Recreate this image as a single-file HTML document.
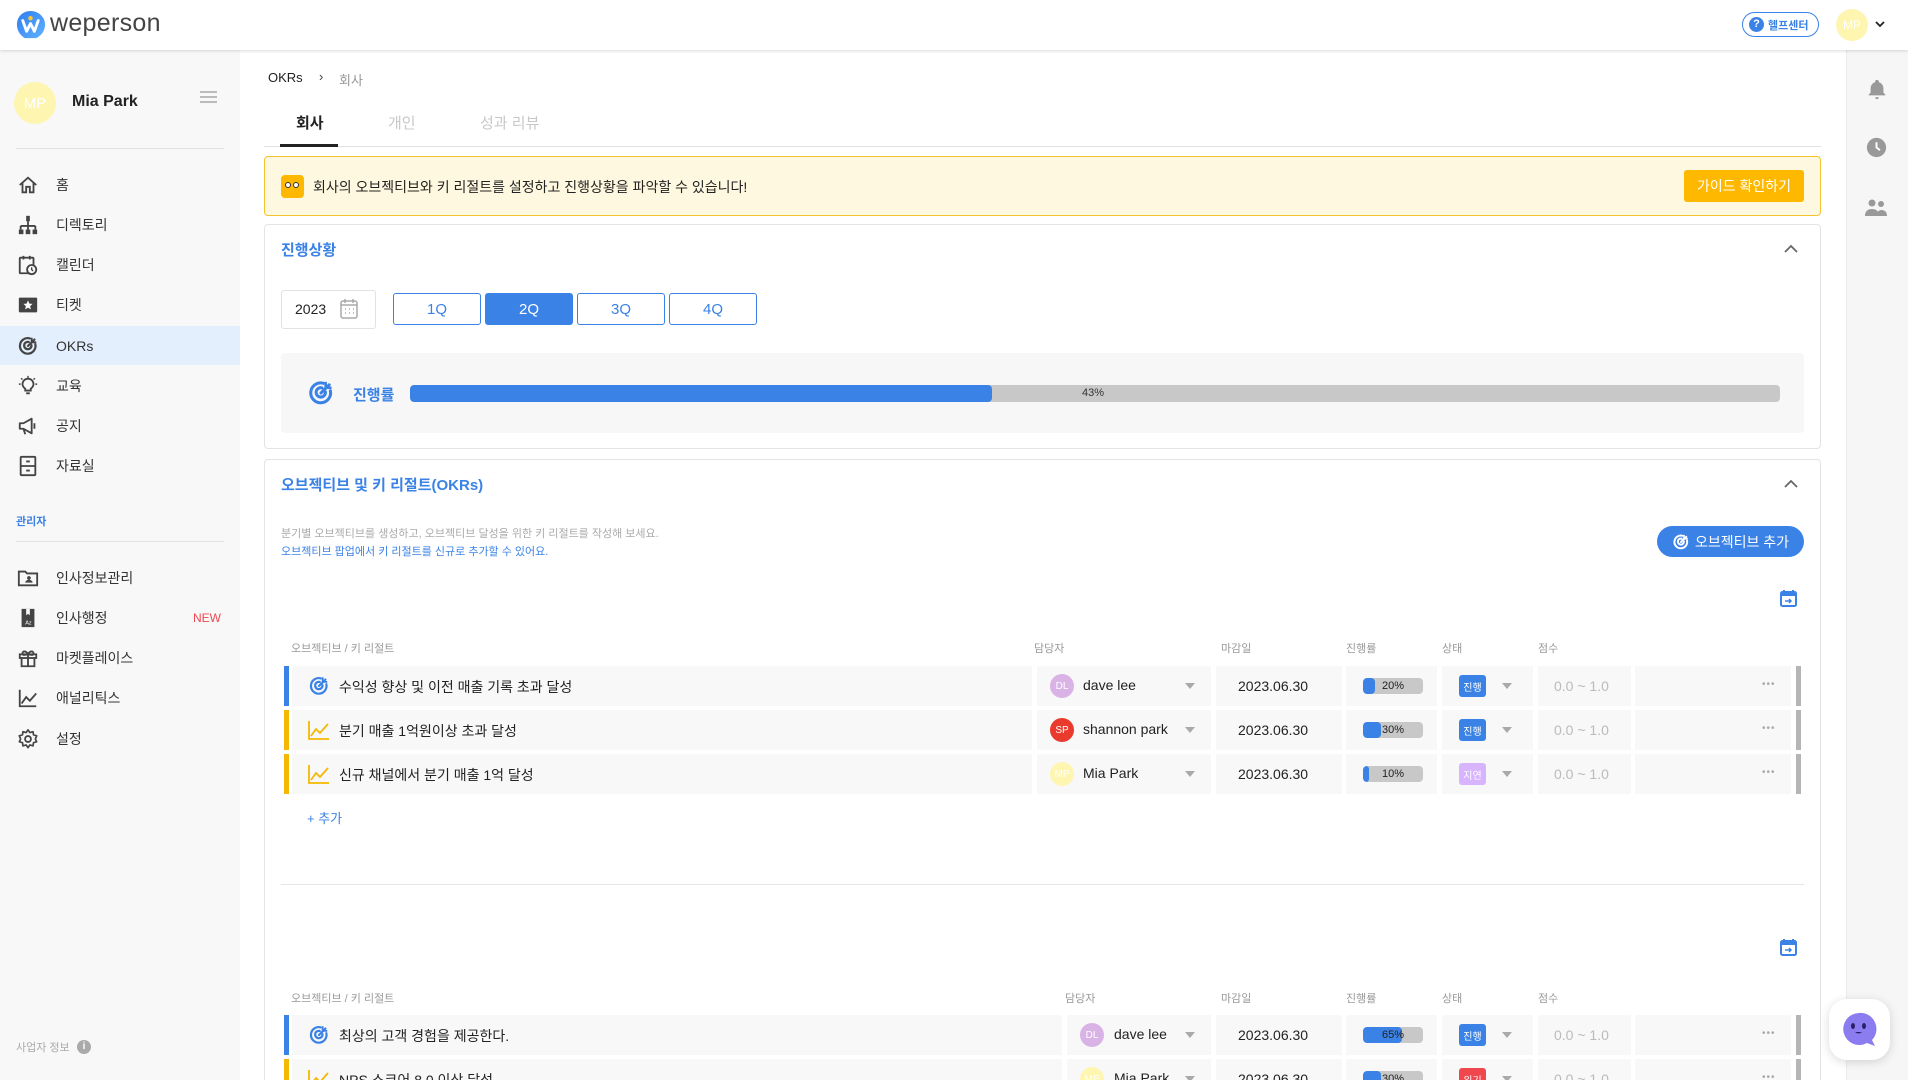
<!DOCTYPE html>
<html><head><meta charset="utf-8">
<style>
*{box-sizing:border-box;margin:0;padding:0}
html,body{width:1908px;height:1080px;overflow:hidden}
body{background:#fff;font-family:"Liberation Sans","Noto Sans CJK KR",sans-serif;color:#222}
#w{position:relative;width:1908px;height:1080px;overflow:hidden}
.a{position:absolute}
.hdr{left:0;top:0;width:1908px;height:50px;background:#fff;box-shadow:0 1px 3px rgba(0,0,0,.15);z-index:5}
.side{left:0;top:50px;width:240px;height:1030px;background:#f8f8f8}
.rail{left:1846px;top:50px;width:62px;height:1030px;background:#f6f6f6;border-left:1px solid #ececec}
.mi{left:0;width:240px;height:40px;display:flex;align-items:center;font-size:14px;color:#333}
.mi svg{position:absolute;left:17px;width:22px;height:22px}
.mi span{position:absolute;left:56px}
.card{background:#fff;border:1px solid #e4e4e4;border-radius:4px}
.qb{top:293px;width:88px;height:32px;border:1px solid #3b82e6;border-radius:3px;color:#3b82e6;font-size:15px;display:flex;align-items:center;justify-content:center;background:#fff}
.th{font-size:11px;color:#999}
.row{left:284px;width:1517px;height:40px}
.c{position:absolute;top:0;height:40px;background:#f8f8f8}
.bar{position:absolute;left:0;top:0;width:5px;height:40px}
.tt{position:absolute;left:55px;top:11px;font-size:14px;color:#222}
.av{position:absolute;top:8px;width:24px;height:24px;border-radius:50%;color:#fff;font-size:10px;display:flex;align-items:center;justify-content:center}
.nm{position:absolute;top:11px;font-size:14px}
.dd{position:absolute;top:17px;width:0;height:0;border-left:5px solid transparent;border-right:5px solid transparent;border-top:6px solid #aaa}
.dt{position:absolute;top:12px;font-size:14px}
.pg{position:absolute;top:12px;width:60px;height:16px;background:#c8c8c8;border-radius:4px;overflow:hidden;font-size:11px;text-align:center;line-height:16px;color:#222}
.pg i{position:absolute;left:0;top:0;height:16px;background:#3b82e6;border-radius:4px}
.pg b{position:relative;font-weight:normal}
.st{position:absolute;top:9px;width:27px;height:22px;border-radius:3px;color:#fff;font-size:10px;display:flex;align-items:center;justify-content:center}
.sc{position:absolute;top:12px;font-size:14px;color:#bbb}
.dots{position:absolute;top:13px;font-size:10px;color:#aaa;letter-spacing:1px}
.rb{position:absolute;left:1512px;top:0;width:5px;height:40px;background:#b5b5b5}
</style></head><body><div id="w">

<!-- header -->
<div class="a hdr">
  <svg class="a" style="left:15px;top:10px" width="31" height="31" viewBox="0 0 32 32"><defs><linearGradient id="lg" x1="0" y1="0" x2="1" y2="1"><stop offset="0" stop-color="#2f7cf0"/><stop offset="1" stop-color="#5fb3ff"/></linearGradient></defs><path d="M16 1C8 1 2 7 2 15c0 6 3 11 8 14h12c6-3 9-8 9-14C31 7 24 1 16 1z" fill="url(#lg)"/><path d="M8 11l4 11 4-8 4 8 4-11" stroke="#fff" stroke-width="3" fill="none" stroke-linejoin="round" stroke-linecap="round"/><circle cx="16" cy="8.5" r="2.3" fill="#ffc82c"/></svg>
  <div class="a" style="left:50px;top:9px;font-size:25px;color:#444;letter-spacing:.3px">weperson</div>
  <div class="a" style="left:1742px;top:12px;width:77px;height:25px;border:1.5px solid #3b82e6;border-radius:13px;display:flex;align-items:center;padding-left:6px;font-size:11px;color:#3b82e6;font-weight:bold"><span style="display:inline-block;width:15px;height:15px;border-radius:50%;background:#3b82e6;color:#fff;font-size:11px;text-align:center;line-height:15px;margin-right:4px">?</span>헬프센터</div>
  <div class="a" style="left:1836px;top:9px;width:32px;height:32px;border-radius:50%;background:#fdf5b0;color:#fff;font-size:12px;display:flex;align-items:center;justify-content:center">MP</div>
  <svg class="a" style="left:1875px;top:20px" width="10" height="8" viewBox="0 0 10 8"><path d="M1 2l4 4 4-4" stroke="#222" stroke-width="1.8" fill="none"/></svg>
</div>

<!-- sidebar -->
<div class="a side"></div>
<div class="a" style="left:14px;top:82px;width:42px;height:42px;border-radius:50%;background:#fdf5b0;color:#fff;font-size:15px;display:flex;align-items:center;justify-content:center">MP</div>
<div class="a" style="left:72px;top:93px;font-size:16px;font-weight:bold">Mia Park</div>
<div class="a" style="left:200px;top:91px;width:17px;height:2px;background:#bbb;box-shadow:0 5px 0 #bbb,0 10px 0 #bbb"></div>
<div class="a" style="left:16px;top:148px;width:208px;height:1px;background:#e2e2e2"></div>

<div class="a mi" style="top:165px"><svg viewBox="0 0 24 24"><path d="M3 12l9-8 9 8M6 10v10h4v-6h4v6h4V10" stroke="#444" stroke-width="2" fill="none"/></svg><span>홈</span></div>
<div class="a mi" style="top:205px"><svg viewBox="0 0 24 24"><rect x="10" y="2" width="4" height="6" fill="#444"/><path d="M12 8v5M4 13h16M4 13v4M12 13v4M20 13v4" stroke="#444" stroke-width="2" fill="none"/><rect x="2" y="17" width="5" height="5" fill="#444"/><rect x="9.5" y="17" width="5" height="5" fill="#444"/><rect x="17" y="17" width="5" height="5" fill="#444"/></svg><span>디렉토리</span></div>
<div class="a mi" style="top:245px"><svg viewBox="0 0 24 24"><rect x="3" y="4" width="15" height="17" rx="1" stroke="#444" stroke-width="2" fill="none"/><path d="M7 2v4M14 2v4" stroke="#444" stroke-width="2"/><circle cx="16" cy="17" r="5" fill="#f8f8f8" stroke="#444" stroke-width="2"/><path d="M16 14.5V17l1.5 1.5" stroke="#444" stroke-width="1.5" fill="none"/></svg><span>캘린더</span></div>
<div class="a mi" style="top:285px"><svg viewBox="0 0 24 24"><rect x="2" y="4" width="20" height="16" rx="1" fill="#444"/><path d="M12 7l1.5 3.5 3.5.3-2.7 2.4.9 3.6L12 15l-3.2 1.8.9-3.6L7 10.8l3.5-.3z" fill="#fff"/></svg><span>티켓</span></div>
<div class="a" style="left:0;top:326px;width:240px;height:39px;background:#e3effd"></div>
<div class="a mi" style="top:326px"><svg viewBox="0 0 24 24"><path d="M20 10A8.5 8.5 0 1 1 14 3.7M15.8 11.2A4 4 0 1 1 12.8 7.6M12 12l7-7" stroke="#444" stroke-width="2.4" fill="none" stroke-linecap="round"/><path d="M16 3v5h5" stroke="#444" stroke-width="2" fill="none"/></svg><span>OKRs</span></div>
<div class="a mi" style="top:366px"><svg viewBox="0 0 24 24"><path d="M9 17h6v-2c2-1.5 3-3 3-5a6 6 0 0 0-12 0c0 2 1 3.5 3 5z M10 20h4" stroke="#444" stroke-width="2" fill="none"/><path d="M12 1v2M2 10h2M20 10h2M4.5 3.5l1.4 1.4M19.5 3.5l-1.4 1.4" stroke="#444" stroke-width="1.6"/></svg><span>교육</span></div>
<div class="a mi" style="top:406px"><svg viewBox="0 0 24 24"><path d="M3 9h4l9-5v16l-9-5H3z M7 15l2 6" stroke="#444" stroke-width="2" fill="none" stroke-linejoin="round"/><path d="M19 9v6" stroke="#444" stroke-width="2"/></svg><span>공지</span></div>
<div class="a mi" style="top:446px"><svg viewBox="0 0 24 24"><rect x="4" y="2" width="16" height="20" rx="1" stroke="#444" stroke-width="2" fill="none"/><path d="M4 12h16M10 7h4M10 17h4" stroke="#444" stroke-width="2"/></svg><span>자료실</span></div>

<div class="a" style="left:16px;top:513px;font-size:11px;color:#3b82e6;font-weight:bold">관리자</div>
<div class="a" style="left:16px;top:541px;width:208px;height:1px;background:#e2e2e2"></div>
<div class="a mi" style="top:558px"><svg viewBox="0 0 24 24"><path d="M2 5h7l2 2h11v13H2z" stroke="#444" stroke-width="2" fill="none"/><circle cx="13" cy="12" r="2" fill="#444"/><path d="M9 17c0-2 2-3 4-3s4 1 4 3z" fill="#444"/></svg><span>인사정보관리</span></div>
<div class="a mi" style="top:598px"><svg viewBox="0 0 24 24"><path d="M5 2h14v20H5z" fill="#444"/><path d="M10 2v7l2-1.5 2 1.5V2" fill="#f8f8f8"/><text x="9" y="19" font-size="6" fill="#fff" font-family="Liberation Sans">Az</text></svg><span>인사행정</span><span style="left:193px;color:#f0474f;font-size:12px">NEW</span></div>
<div class="a mi" style="top:638px"><svg viewBox="0 0 24 24"><rect x="3" y="8" width="18" height="4" stroke="#444" stroke-width="2" fill="none"/><path d="M5 12v9h14v-9M12 8v13M12 8c-2-4-6-4-6-1s4 1 6 1c2 0 6 2 6-1s-4-3-6 1" stroke="#444" stroke-width="2" fill="none"/></svg><span>마켓플레이스</span></div>
<div class="a mi" style="top:678px"><svg viewBox="0 0 24 24"><path d="M3 3v18h18M5 18l5-7 4 4 7-8" stroke="#444" stroke-width="2" fill="none"/></svg><span>애널리틱스</span></div>
<div class="a mi" style="top:719px"><svg viewBox="0 0 24 24"><circle cx="12" cy="12" r="3.2" stroke="#444" stroke-width="2" fill="none"/><path d="M12 2l2 3 3.5-1 .5 3.5 3.5 1-1.5 3.5 1.5 3-3.5 1-.5 3.5-3.5-1-2 3-2-3-3.5 1-.5-3.5-3.5-1 1.5-3-1.5-3.5 3.5-1L6.5 4 10 5z" stroke="#444" stroke-width="1.8" fill="none" stroke-linejoin="round"/></svg><span>설정</span></div>

<div class="a" style="left:16px;top:1039px;font-size:11px;color:#aaa">사업자 정보</div>
<div class="a" style="left:77px;top:1040px;width:14px;height:14px;border-radius:50%;background:#aaa;color:#fff;font-size:10px;text-align:center;line-height:14px;font-weight:bold">i</div>

<!-- right rail -->
<div class="a rail"></div>
<svg class="a" style="left:1866px;top:78px" width="22" height="22" viewBox="0 0 24 24"><path d="M12 2a2 2 0 0 1 2 2v.5A7 7 0 0 1 19 11v5l2 2v1H3v-1l2-2v-5a7 7 0 0 1 5-6.5V4a2 2 0 0 1 2-2zM10 21h4a2 2 0 0 1-4 0" fill="#999"/></svg>
<svg class="a" style="left:1866px;top:137px" width="21" height="21" viewBox="0 0 24 24"><circle cx="12" cy="12" r="11" fill="#999"/><path d="M12 6v6l4 3" stroke="#fff" stroke-width="2.2" fill="none"/></svg>
<svg class="a" style="left:1864px;top:198px" width="24" height="20" viewBox="0 0 24 20"><circle cx="8" cy="5" r="3.5" fill="#999"/><circle cx="17" cy="6" r="3" fill="#999"/><path d="M1 18c0-5 3-7 7-7s7 2 7 7zM13 18c0-3 0-5 4-6 4 0 6 2 6 6z" fill="#999"/></svg>

<!-- breadcrumb & tabs -->
<div class="a" style="left:268px;top:70px;font-size:13px;color:#222">OKRs</div>
<div class="a" style="left:319px;top:69px;font-size:13px;color:#444">›</div>
<div class="a" style="left:339px;top:70px;font-size:13px;color:#999">회사</div>
<div class="a" style="left:264px;top:146px;width:1557px;height:1px;background:#e2e2e2"></div>
<div class="a" style="left:296px;top:112px;font-size:15px;font-weight:bold;color:#222">회사</div>
<div class="a" style="left:280px;top:144px;width:58px;height:3px;background:#222"></div>
<div class="a" style="left:388px;top:112px;font-size:15px;color:#c8c8c8">개인</div>
<div class="a" style="left:480px;top:112px;font-size:15px;color:#c8c8c8">성과 리뷰</div>

<!-- notice -->
<div class="a" style="left:264px;top:156px;width:1557px;height:60px;background:#fff8e0;border:1px solid #f4c430;border-radius:4px"></div>
<div class="a" style="left:281px;top:175px;width:23px;height:23px;border-radius:4px;background:#ffb800"><div class="a" style="left:4px;top:7px;width:6px;height:6px;border-radius:50%;background:#fff;border:1.5px solid #333"></div><div class="a" style="left:12px;top:7px;width:6px;height:6px;border-radius:50%;background:#fff;border:1.5px solid #333"></div></div>
<div class="a" style="left:313px;top:177px;font-size:14px;color:#222">회사의 오브젝티브와 키 리절트를 설정하고 진행상황을 파악할 수 있습니다!</div>
<div class="a" style="left:1684px;top:170px;width:120px;height:32px;background:#ffb800;border-radius:3px;color:#fff;font-size:14px;display:flex;align-items:center;justify-content:center">가이드 확인하기</div>

<!-- progress card -->
<div class="a card" style="left:264px;top:224px;width:1557px;height:225px"></div>
<div class="a" style="left:281px;top:239px;font-size:15px;color:#3b82e6;font-weight:bold">진행상황</div>
<svg class="a" style="left:1784px;top:244px" width="14" height="9" viewBox="0 0 14 9"><path d="M1 8l6-6 6 6" stroke="#666" stroke-width="1.8" fill="none"/></svg>
<div class="a" style="left:281px;top:290px;width:95px;height:39px;border:1px solid #e2e2e2;border-radius:3px;background:#fff"></div>
<div class="a" style="left:295px;top:301px;font-size:14px">2023</div>
<svg class="a" style="left:340px;top:298px" width="18" height="21" viewBox="0 0 18 21"><rect x="1" y="3" width="16" height="17" rx="2" stroke="#aaa" stroke-width="1.5" fill="none"/><path d="M1 7h16M5 1v4M13 1v4" stroke="#aaa" stroke-width="1.5"/><path d="M5 11h1M9 11h1M13 11h1M5 15h1M9 15h1M13 15h1" stroke="#aaa" stroke-width="1.5"/></svg>
<div class="a qb" style="left:393px">1Q</div>
<div class="a qb" style="left:485px;background:#3b82e6;color:#fff">2Q</div>
<div class="a qb" style="left:577px">3Q</div>
<div class="a qb" style="left:669px">4Q</div>
<div class="a" style="left:281px;top:353px;width:1523px;height:80px;background:#f7f7f7;border-radius:4px"></div>
<svg class="a" style="left:307px;top:379px" width="28" height="28" viewBox="0 0 24 24"><path d="M20 10A8.5 8.5 0 1 1 14 3.7M15.8 11.2A4 4 0 1 1 12.8 7.6M12 12l7-7" stroke="#3b82e6" stroke-width="2.6" fill="none" stroke-linecap="round"/><path d="M16 2.5v5h5" stroke="#3b82e6" stroke-width="2.2" fill="none"/></svg>
<div class="a" style="left:353px;top:384px;font-size:15px;color:#3b82e6;font-weight:bold">진행률</div>
<div class="a" style="left:410px;top:385px;width:1370px;height:17px;background:#c8c8c8;border-radius:4px;overflow:hidden"><div style="width:582px;height:17px;background:#3b82e6;border-radius:4px"></div></div>
<div class="a" style="left:1082px;top:387px;font-size:11px;color:#333">43%</div>

<!-- OKR card -->
<div class="a card" style="left:264px;top:459px;width:1557px;height:640px"></div>
<div class="a" style="left:281px;top:474px;font-size:15px;color:#3b82e6;font-weight:bold">오브젝티브 및 키 리절트(OKRs)</div>
<svg class="a" style="left:1784px;top:479px" width="14" height="9" viewBox="0 0 14 9"><path d="M1 8l6-6 6 6" stroke="#666" stroke-width="1.8" fill="none"/></svg>
<div class="a" style="left:281px;top:525px;font-size:11px;color:#aaa">분기별 오브젝티브를 생성하고, 오브젝티브 달성을 위한 키 리절트를 작성해 보세요.</div>
<div class="a" style="left:281px;top:543px;font-size:11px;color:#3b82e6">오브젝티브 팝업에서 키 리절트를 신규로 추가할 수 있어요.</div>
<div class="a" style="left:1657px;top:526px;width:147px;height:31px;background:#3b82e6;border-radius:16px;color:#fff;font-size:14px;display:flex;align-items:center;justify-content:center"><svg width="18" height="18" viewBox="0 0 24 24" style="margin-right:5px"><path d="M20 10A8.5 8.5 0 1 1 14 3.7M15.8 11.2A4 4 0 1 1 12.8 7.6M12 12l7-7" stroke="#fff" stroke-width="2.6" fill="none" stroke-linecap="round"/><path d="M16 2.5v5h5" stroke="#fff" stroke-width="2.2" fill="none"/></svg>오브젝티브 추가</div>

<svg class="a" style="left:1780px;top:589px" width="17" height="18" viewBox="0 0 17 18"><rect x="1" y="3" width="15" height="14" rx="1.5" fill="none" stroke="#3b82e6" stroke-width="2"/><rect x="1" y="3" width="15" height="4" fill="#3b82e6"/><path d="M4 1v3M13 1v3" stroke="#3b82e6" stroke-width="2"/><path d="M5 12h6M9 10l2 2-2 2" stroke="#3b82e6" stroke-width="1.5" fill="none"/></svg>

<div class="a th" style="left:291px;top:640px">오브젝티브 / 키 리절트</div>
<div class="a th" style="left:1034px;top:640px">담당자</div>
<div class="a th" style="left:1221px;top:640px">마감일</div>
<div class="a th" style="left:1346px;top:640px">진행률</div>
<div class="a th" style="left:1442px;top:640px">상태</div>
<div class="a th" style="left:1538px;top:640px">점수</div>

<div class="a row" style="top:666px">
 <div class="bar" style="background:#3b82e6"></div>
 <div class="c" style="left:8px;width:740px"></div><div class="c" style="left:753px;width:174px"></div><div class="c" style="left:932px;width:126px"></div><div class="c" style="left:1062px;width:91px"></div><div class="c" style="left:1158px;width:91px"></div><div class="c" style="left:1254px;width:93px"></div><div class="c" style="left:1351px;width:156px"></div>
 <svg style="position:absolute;left:24px;top:9px" width="22" height="22" viewBox="0 0 24 24"><path d="M20 10A8.5 8.5 0 1 1 14 3.7M15.8 11.2A4 4 0 1 1 12.8 7.6M12 12l7-7" stroke="#3b82e6" stroke-width="2.4" fill="none" stroke-linecap="round"/><path d="M16 2.5v5h5" stroke="#3b82e6" stroke-width="2" fill="none"/></svg>
 <div class="tt">수익성 향상 및 이전 매출 기록 초과 달성</div>
 <div class="av" style="left:766px;background:#d9b3e6">DL</div><div class="nm" style="left:799px">dave lee</div><div class="dd" style="left:901px"></div>
 <div class="dt" style="left:954px">2023.06.30</div>
 <div class="pg" style="left:1079px"><i style="width:12px"></i><b>20%</b></div>
 <div class="st" style="left:1175px;background:#3b82e6">진행</div><div class="dd" style="left:1218px"></div>
 <div class="sc" style="left:1270px">0.0 ~ 1.0</div><div class="dots" style="left:1478px">•••</div><div class="rb"></div>
</div>
<div class="a row" style="top:710px">
 <div class="bar" style="background:#f5b800"></div>
 <div class="c" style="left:8px;width:740px"></div><div class="c" style="left:753px;width:174px"></div><div class="c" style="left:932px;width:126px"></div><div class="c" style="left:1062px;width:91px"></div><div class="c" style="left:1158px;width:91px"></div><div class="c" style="left:1254px;width:93px"></div><div class="c" style="left:1351px;width:156px"></div>
 <svg style="position:absolute;left:24px;top:10px" width="22" height="20" viewBox="0 0 22 20"><path d="M1 1v18h20M3 16l5-7 4 4 8-9" stroke="#f5b800" stroke-width="1.8" fill="none"/></svg>
 <div class="tt">분기 매출 1억원이상 초과 달성</div>
 <div class="av" style="left:766px;background:#ea3a2d">SP</div><div class="nm" style="left:799px">shannon park</div><div class="dd" style="left:901px"></div>
 <div class="dt" style="left:954px">2023.06.30</div>
 <div class="pg" style="left:1079px"><i style="width:18px"></i><b>30%</b></div>
 <div class="st" style="left:1175px;background:#3b82e6">진행</div><div class="dd" style="left:1218px"></div>
 <div class="sc" style="left:1270px">0.0 ~ 1.0</div><div class="dots" style="left:1478px">•••</div><div class="rb"></div>
</div>
<div class="a row" style="top:754px">
 <div class="bar" style="background:#f5b800"></div>
 <div class="c" style="left:8px;width:740px"></div><div class="c" style="left:753px;width:174px"></div><div class="c" style="left:932px;width:126px"></div><div class="c" style="left:1062px;width:91px"></div><div class="c" style="left:1158px;width:91px"></div><div class="c" style="left:1254px;width:93px"></div><div class="c" style="left:1351px;width:156px"></div>
 <svg style="position:absolute;left:24px;top:10px" width="22" height="20" viewBox="0 0 22 20"><path d="M1 1v18h20M3 16l5-7 4 4 8-9" stroke="#f5b800" stroke-width="1.8" fill="none"/></svg>
 <div class="tt">신규 채널에서 분기 매출 1억 달성</div>
 <div class="av" style="left:766px;background:#fdf5b0">MP</div><div class="nm" style="left:799px">Mia Park</div><div class="dd" style="left:901px"></div>
 <div class="dt" style="left:954px">2023.06.30</div>
 <div class="pg" style="left:1079px"><i style="width:6px"></i><b>10%</b></div>
 <div class="st" style="left:1175px;background:#d8b4fe">지연</div><div class="dd" style="left:1218px"></div>
 <div class="sc" style="left:1270px">0.0 ~ 1.0</div><div class="dots" style="left:1478px">•••</div><div class="rb"></div>
</div>
<div class="a" style="left:307px;top:808px;font-size:13px;color:#3b82e6">+ 추가</div>
<div class="a" style="left:281px;top:884px;width:1523px;height:1px;background:#e6e6e6"></div>

<svg class="a" style="left:1780px;top:938px" width="17" height="18" viewBox="0 0 17 18"><rect x="1" y="3" width="15" height="14" rx="1.5" fill="none" stroke="#3b82e6" stroke-width="2"/><rect x="1" y="3" width="15" height="4" fill="#3b82e6"/><path d="M4 1v3M13 1v3" stroke="#3b82e6" stroke-width="2"/><path d="M5 12h6M9 10l2 2-2 2" stroke="#3b82e6" stroke-width="1.5" fill="none"/></svg>

<div class="a th" style="left:291px;top:990px">오브젝티브 / 키 리절트</div>
<div class="a th" style="left:1065px;top:990px">담당자</div>
<div class="a th" style="left:1221px;top:990px">마감일</div>
<div class="a th" style="left:1346px;top:990px">진행률</div>
<div class="a th" style="left:1442px;top:990px">상태</div>
<div class="a th" style="left:1538px;top:990px">점수</div>

<div class="a row" style="top:1015px">
 <div class="bar" style="background:#3b82e6"></div>
 <div class="c" style="left:8px;width:770px"></div><div class="c" style="left:783px;width:144px"></div><div class="c" style="left:932px;width:126px"></div><div class="c" style="left:1062px;width:91px"></div><div class="c" style="left:1158px;width:91px"></div><div class="c" style="left:1254px;width:93px"></div><div class="c" style="left:1351px;width:156px"></div>
 <svg style="position:absolute;left:24px;top:9px" width="22" height="22" viewBox="0 0 24 24"><path d="M20 10A8.5 8.5 0 1 1 14 3.7M15.8 11.2A4 4 0 1 1 12.8 7.6M12 12l7-7" stroke="#3b82e6" stroke-width="2.4" fill="none" stroke-linecap="round"/><path d="M16 2.5v5h5" stroke="#3b82e6" stroke-width="2" fill="none"/></svg>
 <div class="tt">최상의 고객 경험을 제공한다.</div>
 <div class="av" style="left:796px;background:#d9b3e6">DL</div><div class="nm" style="left:830px">dave lee</div><div class="dd" style="left:901px"></div>
 <div class="dt" style="left:954px">2023.06.30</div>
 <div class="pg" style="left:1079px"><i style="width:39px"></i><b>65%</b></div>
 <div class="st" style="left:1175px;background:#3b82e6">진행</div><div class="dd" style="left:1218px"></div>
 <div class="sc" style="left:1270px">0.0 ~ 1.0</div><div class="dots" style="left:1478px">•••</div><div class="rb"></div>
</div>
<div class="a row" style="top:1059px">
 <div class="bar" style="background:#f5b800"></div>
 <div class="c" style="left:8px;width:770px"></div><div class="c" style="left:783px;width:144px"></div><div class="c" style="left:932px;width:126px"></div><div class="c" style="left:1062px;width:91px"></div><div class="c" style="left:1158px;width:91px"></div><div class="c" style="left:1254px;width:93px"></div><div class="c" style="left:1351px;width:156px"></div>
 <svg style="position:absolute;left:24px;top:10px" width="22" height="20" viewBox="0 0 22 20"><path d="M1 1v18h20M3 16l5-7 4 4 8-9" stroke="#f5b800" stroke-width="1.8" fill="none"/></svg>
 <div class="tt">NPS 스코어 8.0 이상 달성</div>
 <div class="av" style="left:796px;background:#fdf5b0">MP</div><div class="nm" style="left:830px">Mia Park</div><div class="dd" style="left:901px"></div>
 <div class="dt" style="left:954px">2023.06.30</div>
 <div class="pg" style="left:1079px"><i style="width:18px"></i><b>30%</b></div>
 <div class="st" style="left:1175px;background:#f0474f">위기</div><div class="dd" style="left:1218px"></div>
 <div class="sc" style="left:1270px">0.0 ~ 1.0</div><div class="dots" style="left:1478px">•••</div><div class="rb"></div>
</div>

<!-- chat widget -->
<div class="a" style="left:1829px;top:999px;width:61px;height:61px;border-radius:18px;background:#fff;box-shadow:0 2px 10px rgba(0,0,0,.15)"></div>
<svg class="a" style="left:1841px;top:1011px" width="38" height="38" viewBox="0 0 38 38"><path d="M18 2a16 16 0 1 0 8 30l8 3-3-6A16 16 0 0 0 18 2z" fill="#8b7cf0"/><ellipse cx="12" cy="15" rx="2" ry="3" fill="#2b1f66"/><ellipse cx="23" cy="15" rx="2" ry="3" fill="#2b1f66"/><path d="M14 21q3.5 3 7 0z" fill="#2b1f66"/></svg>

</div></body></html>
